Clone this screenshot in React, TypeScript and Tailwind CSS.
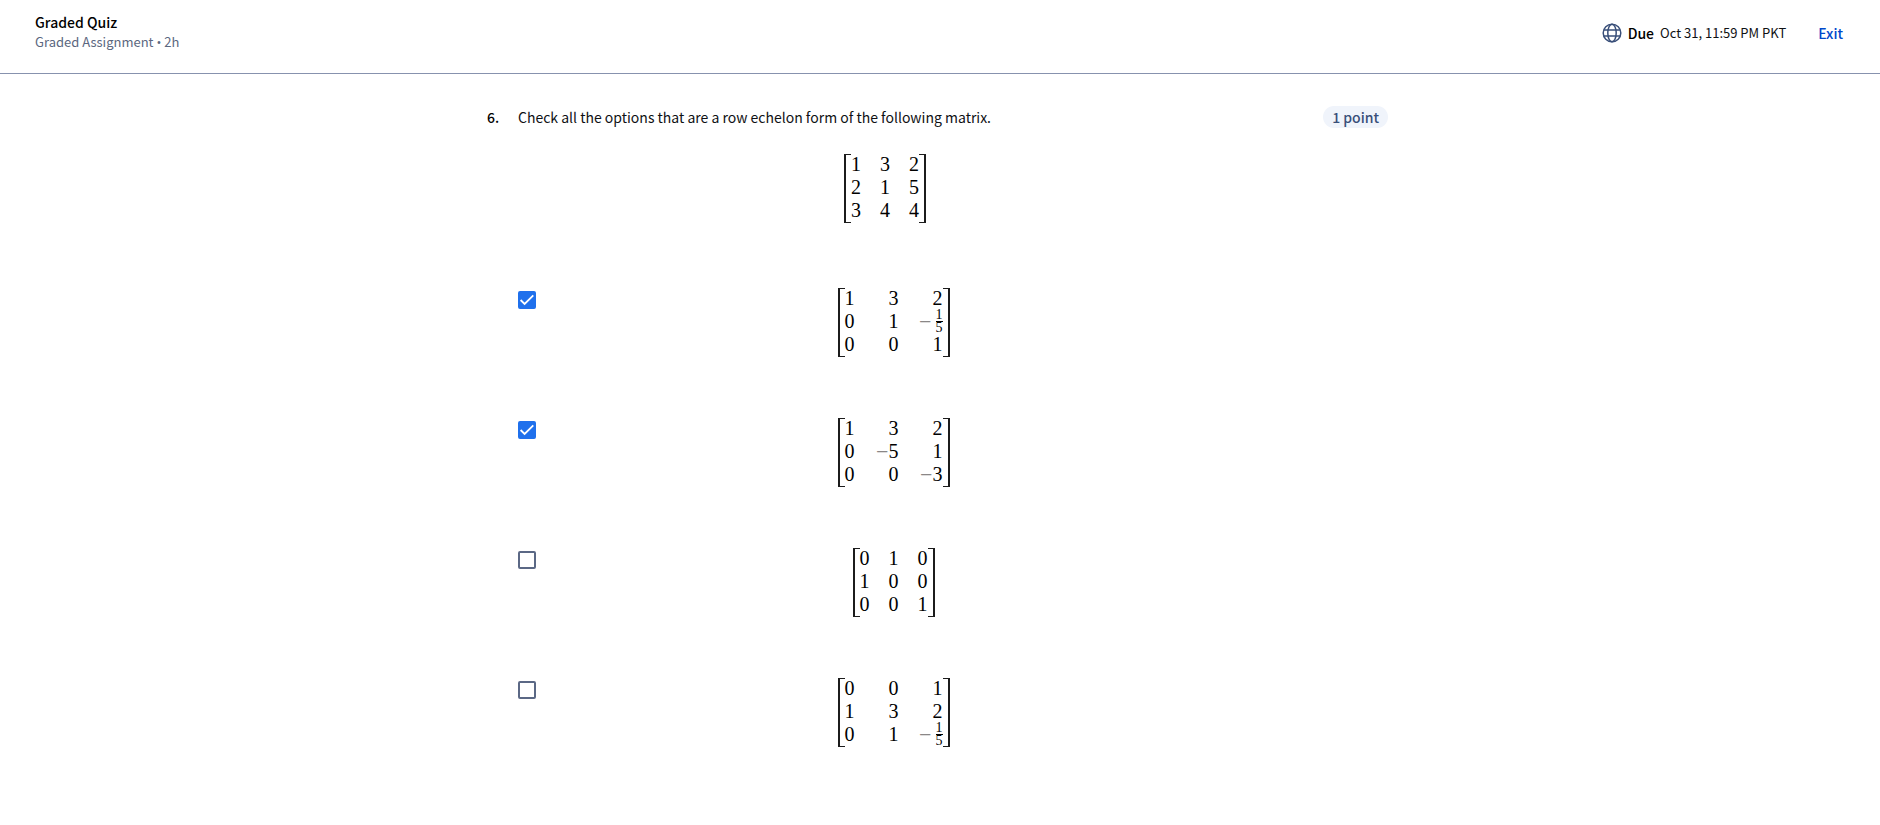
import { useState } from "react";

type Cell = string | { fraction: [string, string] };

interface MatrixData {
  label: string;
  rows: Cell[][];
  wide?: boolean;
}

const question: MatrixData = {
  label: "Question matrix",
  rows: [
    ["1", "3", "2"],
    ["2", "1", "5"],
    ["3", "4", "4"],
  ],
};

const options: (MatrixData & { checked: boolean })[] = [
  {
    label: "Option 1",
    checked: true,
    wide: true,
    rows: [
      ["1", "3", "2"],
      ["0", "1", { fraction: ["1", "5"] }],
      ["0", "0", "1"],
    ],
  },
  {
    label: "Option 2",
    checked: true,
    wide: true,
    rows: [
      ["1", "3", "2"],
      ["0", "-5", "1"],
      ["0", "0", "-3"],
    ],
  },
  {
    label: "Option 3",
    checked: false,
    rows: [
      ["0", "1", "0"],
      ["1", "0", "0"],
      ["0", "0", "1"],
    ],
  },
  {
    label: "Option 4",
    checked: false,
    wide: true,
    rows: [
      ["0", "0", "1"],
      ["1", "3", "2"],
      ["0", "1", { fraction: ["1", "5"] }],
    ],
  },
];

function Minus() {
  return <span className="text-[22px] text-[#8a8787]">−</span>;
}

function CellContent({ value }: { value: Cell }) {
  const row = "flex h-[23px] items-center justify-end";
  if (typeof value !== "string") {
    return (
      <div className={row}>
        <Minus />
        <span className="ml-1 flex flex-col items-center text-[14px] leading-[12px]">
          <span>{value.fraction[0]}</span>
          <span className="h-px w-full bg-black" />
          <span>{value.fraction[1]}</span>
        </span>
      </div>
    );
  }
  if (value.startsWith("-")) {
    return (
      <div className={row}>
        <Minus />
        <span>{value.slice(1)}</span>
      </div>
    );
  }
  return <div className={row}>{value}</div>;
}

function Matrix({ data }: { data: MatrixData }) {
  return (
    <div className="flex font-['Liberation_Serif',serif] text-[20px] leading-[23px] text-black">
      <span className="mt-px w-[7px] border-y border-l-2 border-[#1c1c1c]" />
      <table aria-label={data.label} className="mb-px border-collapse">
        <tbody>
          {data.rows.map((row, r) => (
            <tr key={r}>
              {row.map((cell, c) => (
                <td
                  key={c}
                  className={
                    c === 0 ? "p-0" : data.wide ? "w-[44px] p-0" : "w-[29px] p-0"
                  }
                >
                  <CellContent value={cell} />
                </td>
              ))}
            </tr>
          ))}
        </tbody>
      </table>
      <span className="mt-px w-[7px] border-y border-r-2 border-[#1c1c1c]" />
    </div>
  );
}

function GlobeIcon() {
  return (
    <svg
      viewBox="0 0 20 20"
      className="size-5"
      fill="none"
      stroke="#394f79"
      strokeWidth="1.5"
      aria-hidden="true"
    >
      <circle cx="10" cy="10" r="8.8" />
      <ellipse cx="10" cy="10" rx="4.2" ry="8.8" />
      <path d="M1.900 7h16.200M1.900 13h16.200" />
    </svg>
  );
}

function Checkbox({
  id,
  checked,
  onChange,
}: {
  id: string;
  checked: boolean;
  onChange: () => void;
}) {
  return (
    <span className="mt-1 grid size-[18px] shrink-0">
      <input
        id={id}
        type="checkbox"
        checked={checked}
        onChange={onChange}
        className="col-start-1 row-start-1 size-[18px] appearance-none rounded-[2px] border-2 border-[#5b6885] bg-white checked:border-[#1f70ec] checked:bg-[#1f70ec]"
      />
      {checked && (
        <svg
          viewBox="0 0 18 18"
          className="pointer-events-none col-start-1 row-start-1 size-[18px]"
          fill="none"
          stroke="white"
          strokeWidth="1.8"
          aria-hidden="true"
        >
          <path d="M2.600 9l4 4L15.300 4.300" />
        </svg>
      )}
    </span>
  );
}

export default function App() {
  const [selected, setSelected] = useState(options.map((o) => o.checked));

  const toggle = (index: number) =>
    setSelected((prev) => prev.map((v, i) => (i === index ? !v : v)));

  return (
    <div className="min-h-screen bg-white font-['Noto_Sans_CJK_SC',sans-serif] text-[#0f1114]">
      <header className="flex h-[74px] items-start justify-between border-b border-[#8792ae] pr-[37px] pl-[35px]">
        <div className="pt-3">
          <h1 className="text-[14px] leading-[20px] font-medium text-black">Graded Quiz</h1>
          <p className="text-[13px] leading-[20px] text-[#5b6780]">
            Graded Assignment <span className="font-['Open_Sans',sans-serif]">•</span> 2h
          </p>
        </div>
        <div className="flex items-center pt-[21px] leading-[24px]">
          <GlobeIcon />
          <span className="ml-[6px] text-[14px] font-medium text-black">Due</span>
          <span className="ml-[6px] text-[13px]">Oct 31, 11:59 PM PKT</span>
          <button type="button" className="ml-8 text-[14px] font-medium text-[#0048cb]">
            Exit
          </button>
        </div>
      </header>

      <main className="pt-8 pr-[5px]">
        <div className="mx-auto max-w-[901px]">
          <div className="flex items-start text-[14px] leading-[22px]">
            <span className="w-[31px] shrink-0 font-medium text-black">6.</span>
            <p className="flex-1">
              Check all the options that are a row echelon form of the following matrix.
            </p>
            <span className="rounded-full bg-[#f0f4fb] px-[9px] font-medium text-[#394f79]">
              1 point
            </span>
          </div>

          <div className="mt-[25px] mr-[136px] ml-[31px] flex justify-center">
            <Matrix data={question} />
          </div>

          <div className="mt-16 mr-[150px] ml-[31px] flex flex-col gap-[60px]">
            {options.map((option, i) => (
              <div key={option.label} className="flex items-start">
                <Checkbox
                  id={`option-${i}`}
                  checked={selected[i]}
                  onChange={() => toggle(i)}
                />
                <label htmlFor={`option-${i}`} className="ml-[13px] flex flex-1 justify-center">
                  <Matrix data={option} />
                </label>
              </div>
            ))}
          </div>
        </div>
      </main>
    </div>
  );
}
